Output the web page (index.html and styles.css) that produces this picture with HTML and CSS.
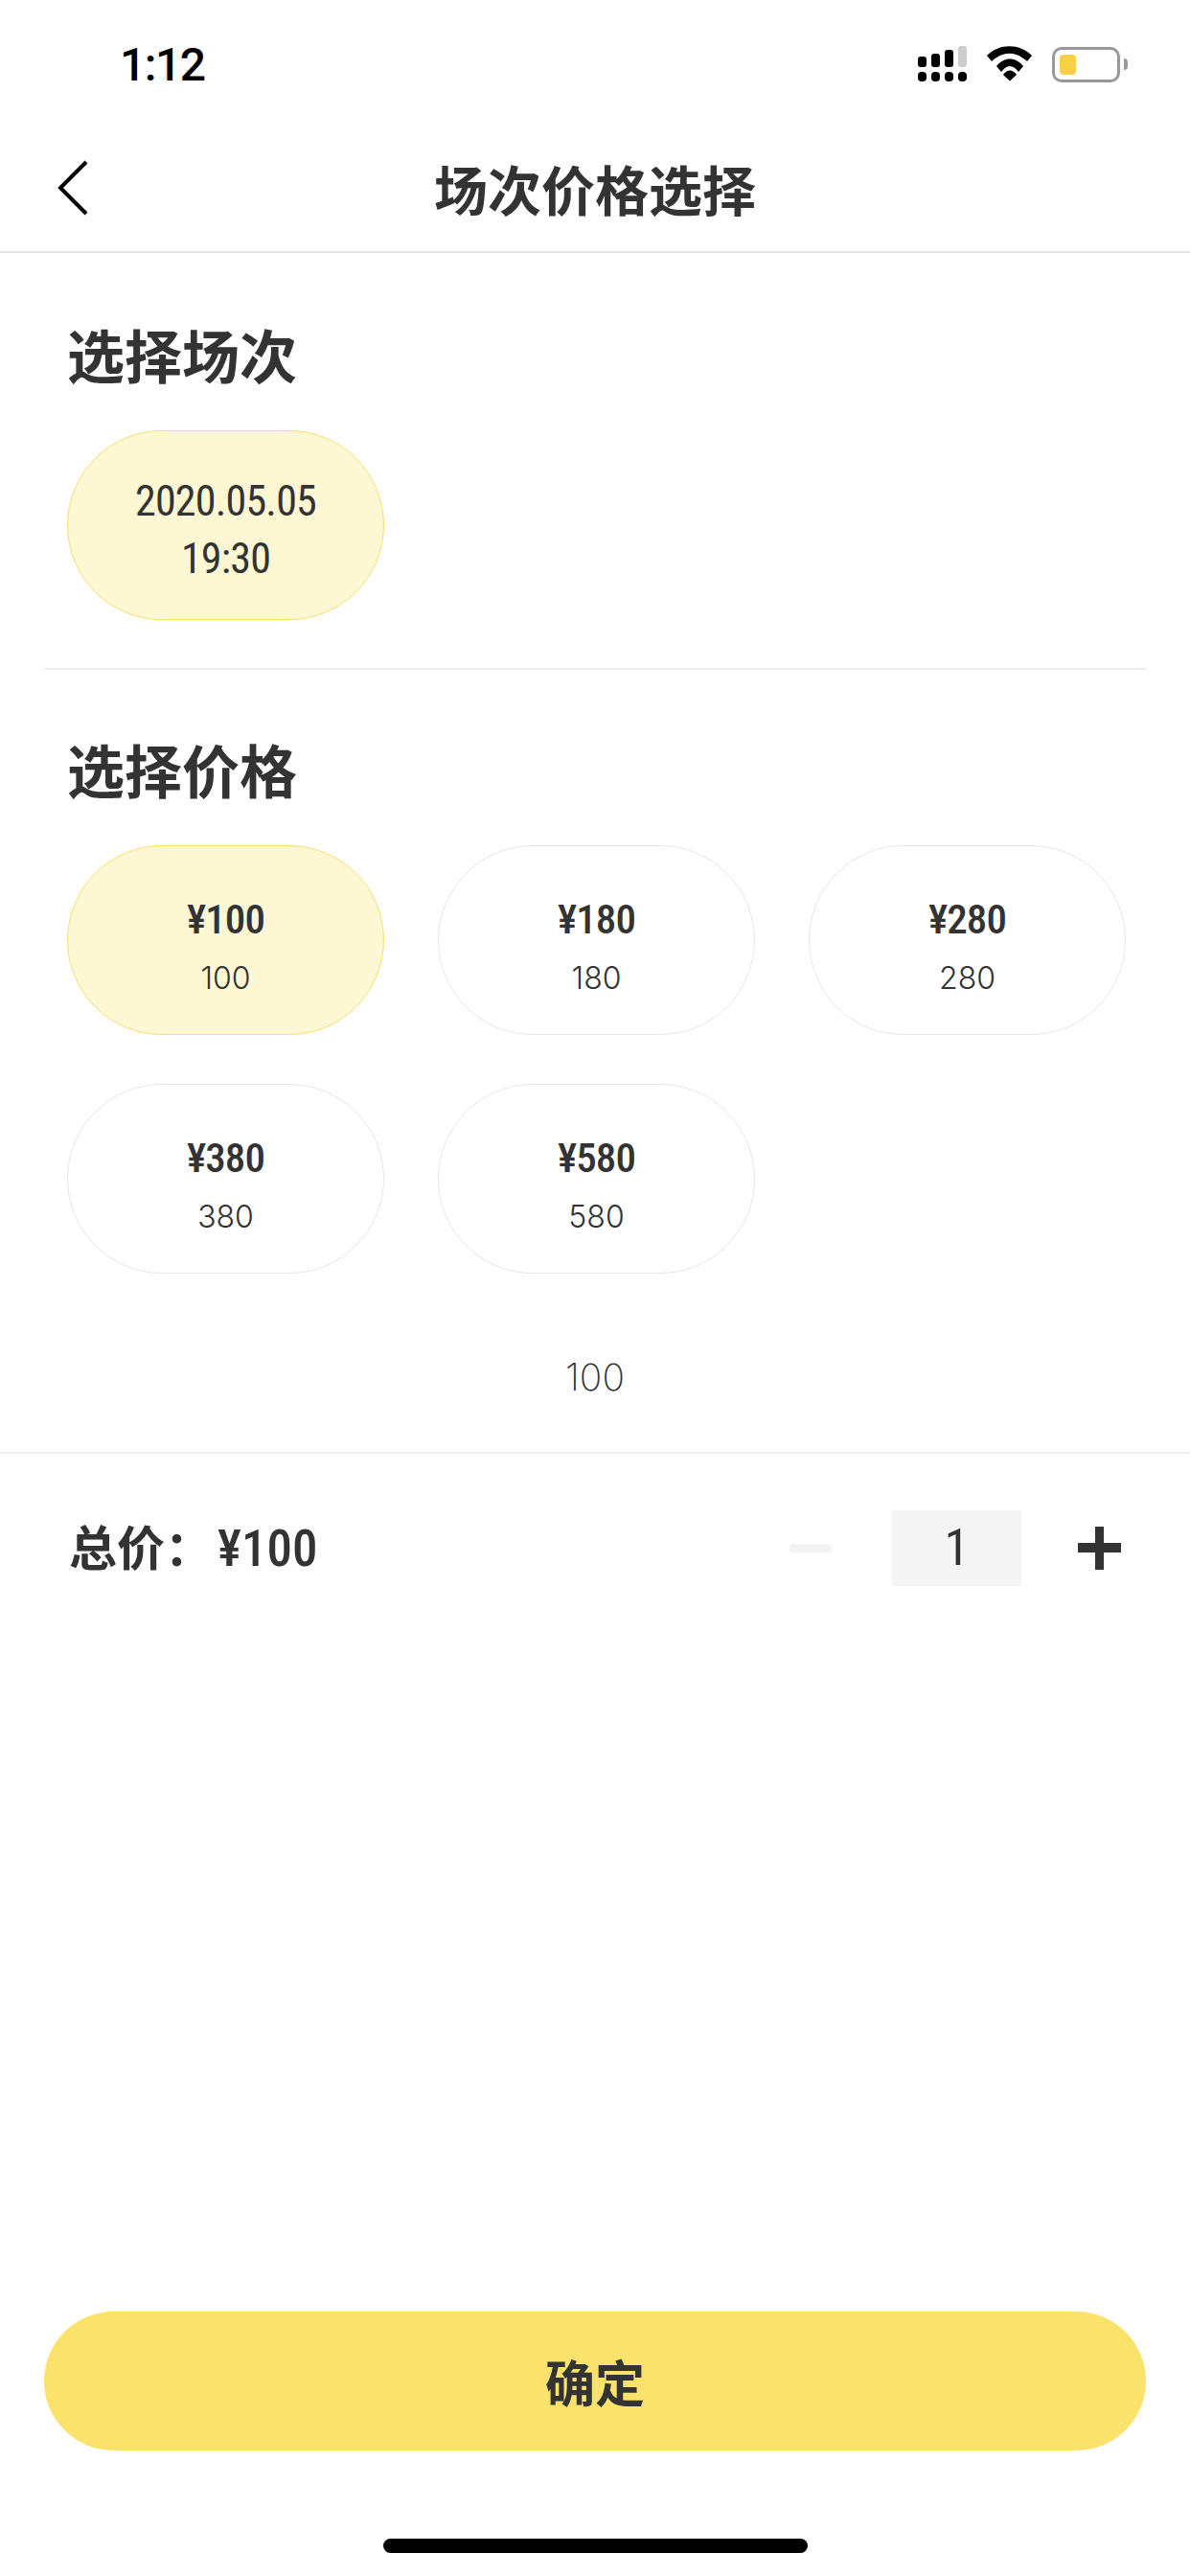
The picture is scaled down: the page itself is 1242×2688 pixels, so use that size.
FILE: index.html
```html
<!DOCTYPE html>
<html>
<head>
    <title>场次价格选择</title>
    <link rel="stylesheet" href="styles.css">
</head>
<body>
    <div class="status-bar">
        <span class="clock">1:12</span>
        <div class="status-icons">
            <svg class="signal" width="52" height="38" viewBox="0 0 52 38">
                <rect x="0" y="11" width="9" height="11" rx="3"/>
                <rect x="14" y="8" width="9" height="14" rx="3"/>
                <rect x="28" y="4" width="9" height="18" rx="3"/>
                <rect x="42" y="0" width="9" height="22" rx="3" fill="#ccc"/>
                <rect x="0" y="27" width="9" height="10" rx="4"/>
                <rect x="14" y="27" width="9" height="10" rx="4"/>
                <rect x="28" y="27" width="9" height="10" rx="4"/>
                <rect x="42" y="27" width="9" height="10" rx="4"/>
            </svg>
            <svg class="wifi" width="48" height="37" viewBox="0 0 48 37">
                <path d="M0 10C13 -3 34 -3 47 10L42 16C30 5 17 5 5 16Z"/>
                <path d="M10 21C18 11 30 11 38 21L33 27C27 19 21 19 15 27Z"/>
                <path d="M17 30C21 24 27 24 31 30L24 36.500Z"/>
            </svg>
            <div class="battery">
                <div class="battery-fill"></div>
            </div>
            <div class="battery-cap"></div>
        </div>
    </div>

    <div class="nav-bar">
        <svg class="back" width="34" height="58" viewBox="0 0 34 58" fill="none" stroke="#000" stroke-width="4">
            <path d="M31 2L4 29L31 56"/>
        </svg>
        <span class="nav-title">场次价格选择</span>
    </div>

    <div class="content">
        <div class="section section-first">
            <h2>选择场次</h2>
            <div class="chips">
                <div class="chip active">
                    <span class="chip-date">2020.05.05</span>
                    <span class="chip-date">19:30</span>
                </div>
            </div>
        </div>
        <div class="divider"></div>
        <div class="section">
            <h2>选择价格</h2>
            <div class="chips">
                <div class="chip active">
                    <span class="chip-price">¥100</span>
                    <span class="chip-sub">100</span>
                </div>
                <div class="chip">
                    <span class="chip-price">¥180</span>
                    <span class="chip-sub">180</span>
                </div>
                <div class="chip">
                    <span class="chip-price">¥280</span>
                    <span class="chip-sub">280</span>
                </div>
                <div class="chip">
                    <span class="chip-price">¥380</span>
                    <span class="chip-sub">380</span>
                </div>
                <div class="chip">
                    <span class="chip-price">¥580</span>
                    <span class="chip-sub">580</span>
                </div>
            </div>
            <p class="note">100</p>
        </div>

        <div class="total-row">
            <div class="total">总价：<span class="total-num">¥100</span></div>
            <div class="stepper">
                <div class="minus"></div>
                <div class="qty">1</div>
                <div class="plus"></div>
            </div>
        </div>
    </div>

    <div class="confirm">确定</div>
    <div class="home-row">
        <div class="home-bar"></div>
    </div>
</body>
</html>
```

FILE: styles.css
```css
* { box-sizing: border-box; }
html, body { margin: 0; padding: 0; }
body { width: 1242px; height: 2688px; display: flex; flex-direction: column; background: #fff; color: #333; font-family: "Noto Sans CJK SC", Roboto, sans-serif; overflow: hidden; }

.status-bar { height: 130px; flex: none; display: flex; justify-content: space-between; padding: 40px 65px 0 125px; }
.clock { font-family: Roboto, sans-serif; font-size: 48px; font-weight: 500; line-height: 56px; letter-spacing: -1.500px; color: #000; }
.status-icons { display: flex; align-items: flex-start; padding-top: 8px; }
.signal { margin-right: 20px; }
.wifi { margin-right: 20px; }
.battery { width: 71px; height: 37px; padding: 5px; border: 3px solid #999; border-radius: 10px; margin-top: 1px; }
.battery-fill { width: 17px; height: 100%; background: #f9d045; border-radius: 4px; }
.battery-cap { width: 4px; height: 12px; margin: 13px 0 0 4px; background: #999; border-radius: 0 4px 4px 0; }

.nav-bar { height: 134px; flex: none; display: flex; align-items: center; justify-content: center; position: relative; border-bottom: 2px solid #e6e6e6; }
.back { position: absolute; left: 59px; top: 37px; }
.nav-title { font-size: 56px; font-weight: 700; line-height: 70px; }

.content { flex: 1; }
.section { padding: 68px 0 0 70px; }
.section-first { padding: 70px 0 50px 70px; }
h2 { margin: 0 0 45px; font-size: 60px; font-weight: 700; line-height: 70px; }

.chips { display: grid; grid-template-columns: repeat(3, 331px); column-gap: 56px; row-gap: 51px; }
.chip { height: 198px; padding-top: 10px; border: 1px solid #e6e6e6; border-radius: 99px; display: flex; flex-direction: column; align-items: center; justify-content: center; }
.chip.active { background: #fdf7d3; border-color: #f8df70; }
.chip-date { font-family: Roboto, sans-serif; font-size: 44px; font-stretch: 82%; line-height: 60px; letter-spacing: -0.800px; }
.chip-price { font-family: Roboto, sans-serif; font-size: 43px; font-stretch: 82%; font-weight: 500; line-height: 60px; letter-spacing: -0.900px; }
.chip-sub { font-family: Inter, sans-serif; font-size: 32px; line-height: 44px; margin-top: 10px; font-weight: 300; }

.divider { height: 2px; margin: 0 46px; background: #eee; }

.note { margin: 78px 0 48px -70px; font-family: Inter, sans-serif; font-size: 39px; font-weight: 250; line-height: 60px; text-align: center; }

.total-row { height: 198px; display: flex; justify-content: space-between; align-items: center; padding: 0 72px 3px 72px; border-top: 2px solid #eee; }
.total { font-size: 50px; font-weight: 700; line-height: 60px; }
.total-num { margin-left: 5px; font-family: Roboto, sans-serif; font-size: 53px; font-stretch: 84%; font-weight: 500; }
.stepper { display: flex; align-items: center; margin-top: 3px; }
.minus { width: 44px; height: 9px; margin-right: 63px; background: #f3f3f3; border-radius: 4px; }
.qty { width: 135px; height: 79px; background: #f5f5f5; font-family: Roboto, sans-serif; font-size: 53px; font-stretch: 84%; line-height: 79px; text-align: center; }
.plus { width: 45px; height: 45px; margin: 0 0 0 59px; background: linear-gradient(#333, #333) center / 100% 10px no-repeat, linear-gradient(#333, #333) center / 9px 100% no-repeat; border-radius: 5px; }

.confirm { flex: none; height: 145px; margin: 0 46px; background: #fbe36b; border-radius: 73px; font-size: 52px; font-weight: 700; line-height: 145px; text-align: center; }
.home-row { flex: none; height: 131px; display: flex; justify-content: center; padding-top: 92px; }
.home-bar { width: 443px; height: 15px; background: #000; border-radius: 8px; }
```
